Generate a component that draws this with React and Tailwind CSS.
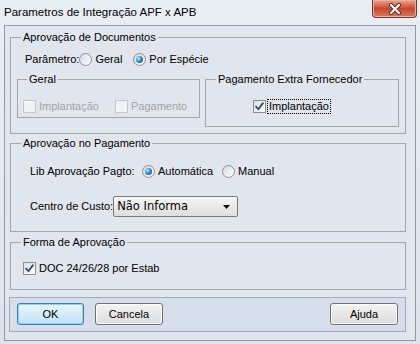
import React from "react";

function Radio({ checked }) {
  return (
    <span className="flex h-[13px] w-[13px] shrink-0 items-center justify-center rounded-full border border-[#8b8f94] bg-linear-to-br from-[#d5d9df] to-[#ffffff]">
      {checked && (
        <span className="h-[7px] w-[7px] rounded-full bg-radial-[at_35%_35%] from-[#bdeeff] via-[#2f86c9] to-[#123f73]" />
      )}
    </span>
  );
}

function Check({ checked, disabled }) {
  return (
    <span
      className={
        disabled
          ? "flex h-[13px] w-[13px] shrink-0 items-center justify-center border border-[#c4c6c9] bg-[#f2f3f5]"
          : "flex h-[13px] w-[13px] shrink-0 items-center justify-center border border-[#8e8f8f] bg-linear-to-br from-[#d9dfe8] to-[#ffffff]"
      }
    >
      {checked && (
        <svg width="11" height="11" viewBox="0 0 11 11">
          <path d="M2 5.6 L4.4 8.2 L9 2.2" fill="none" stroke="#3a4f86" strokeWidth="1.9" strokeLinecap="round" strokeLinejoin="round" />
        </svg>
      )}
    </span>
  );
}

function Group({ label, className, labelClass, children }) {
  return (
    <div className={"relative border border-[#a2a7ad] " + className}>
      <span className={"absolute top-[-9px] bg-[#e1e6ee] px-[2px] leading-[16px] text-black " + labelClass}>{label}</span>
      {children}
    </div>
  );
}

function Button({ children, focused }) {
  return (
    <div
      className={
        focused
          ? "flex h-[22px] w-[67px] items-center justify-center rounded-[3px] border border-[#3c7fb1] bg-linear-to-b from-[#eaf6fd] to-[#bfe2f6] shadow-[inset_0_0_0_1px_#8fd3f5]"
          : "flex h-[22px] w-[68px] items-center justify-center rounded-[3px] border border-[#707070] bg-linear-to-b from-[#f4f4f4] to-[#dcdcdc] shadow-[inset_0_0_0_1px_#fbfbfb]"
      }
    >
      {children}
    </div>
  );
}

export default function App() {
  return (
    <div className="relative h-[344px] w-[420px] overflow-hidden whitespace-nowrap bg-linear-to-b from-[#e9eef4] to-[#dde4ed] font-['Liberation_Sans',Arial,sans-serif] text-[11px] text-black">
      {/* Title bar */}
      <div className="flex h-[25px] items-start justify-between">
        <span className="mt-[4px] ml-[4px] text-[11.5px] leading-[16px] text-black">Parametros de Integração APF x APB</span>
        <div className="mr-[3px] flex h-[18px] w-[45px] items-center justify-center rounded-b-[4px] border border-t-0 border-[#7a3426] bg-linear-to-b from-[#e8a493] via-[#c9462f] to-[#d97a62] shadow-[inset_0_0_0_1px_#eab0a2]">
          <svg width="14" height="12" viewBox="0 0 14 12">
            <path d="M3 2 L11 10 M11 2 L3 10" stroke="#5a2a20" strokeWidth="4" strokeLinecap="round" />
            <path d="M3 2 L11 10 M11 2 L3 10" stroke="#ffffff" strokeWidth="2.2" strokeLinecap="round" />
          </svg>
        </div>
      </div>

      {/* Client area */}
      <div className="ml-[4px] flex h-[316px] w-[412px] flex-col border border-[#8e9aa8] bg-[#e1e6ee] pt-[11px] pl-[5px]">
        {/* Aprovação de Documentos */}
        <Group label="Aprovação de Documentos" className="h-[97px] w-[396px]" labelClass="left-[10px]">
          <div className="mt-[13px] flex h-[16px] items-center pl-[14px]">
            <span className="shrink-0">Parâmetro:</span>
            <Radio />
            <span className="ml-[3px]">Geral</span>
            <span className="ml-[11px]"><Radio checked /></span>
            <span className="ml-[3px]">Por Espécie</span>
          </div>
          <div className="mt-[12px] flex items-start pl-[6px]">
            <Group label="Geral" className="h-[39px] w-[183px]" labelClass="left-[9px]">
              <div className="mt-[18px] flex h-[16px] items-center pl-[5px] text-[#a3a3a3]">
                <Check disabled />
                <span className="ml-[3px]">Implantação</span>
                <span className="ml-[16px]"><Check disabled /></span>
                <span className="ml-[3px]">Pagamento</span>
              </div>
            </Group>
            <Group label="Pagamento Extra Fornecedor" className="ml-[5px] h-[48px] w-[194px]" labelClass="left-[10px]">
              <div className="mt-[18px] flex h-[16px] items-center pl-[47px]">
                <Check checked />
                <span className="ml-[1px] border border-dotted border-black px-[1px] leading-[13px]">Implantação</span>
              </div>
            </Group>
          </div>
        </Group>

        {/* Aprovação no Pagamento */}
        <Group label="Aprovação no Pagamento" className="mt-[9px] h-[89px] w-[396px]" labelClass="left-[10px]">
          <div className="mt-[19px] flex h-[16px] items-center pl-[19px]">
            <span className="w-[112px] shrink-0">Lib Aprovação Pagto:</span>
            <Radio checked />
            <span className="ml-[3px] shrink-0">Automática</span>
            <span className="ml-[9px]"><Radio /></span>
            <span className="ml-[3px]">Manual</span>
          </div>
          <div className="mt-[17px] flex h-[21px] items-center pl-[19px]">
            <span className="shrink-0">Centro de Custo:</span>
            <div className="flex h-[21px] w-[125px] shrink-0 items-center justify-between rounded-[2px] border border-[#7b7b7b] bg-linear-to-b from-[#f6f6f6] to-[#dedede] pr-[7px] pl-[3px] font-['DejaVu_Sans',sans-serif] text-[11.5px]">
              <span>Não Informa</span>
              <svg width="7" height="4" viewBox="0 0 7 4">
                <path d="M0 0 L7 0 L3.5 4 Z" fill="#000" />
              </svg>
            </div>
          </div>
        </Group>

        {/* Forma de Aprovação */}
        <Group label="Forma de Aprovação" className="mt-[10px] h-[48px] w-[396px]" labelClass="left-[10px]">
          <div className="mt-[17px] flex h-[16px] items-center pl-[12px]">
            <Check checked />
            <span className="ml-[3px]">DOC 24/26/28 por Estab</span>
          </div>
        </Group>

        {/* Buttons panel */}
        <div className="mt-[7px] -ml-[1px] flex h-[35px] w-[397px] items-start justify-between border border-[#9eabbf] bg-[#d6deeb] pt-[5px] pr-[7px] pl-[7px]">
          <div className="flex gap-[11px]">
            <Button focused>OK</Button>
            <Button>Cancela</Button>
          </div>
          <Button>Ajuda</Button>
        </div>
      </div>
    </div>
  );
}
